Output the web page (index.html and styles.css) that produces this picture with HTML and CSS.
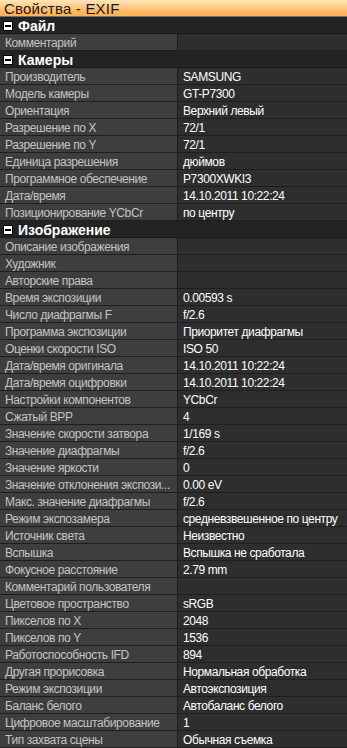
FILE: index.html
```html
<!DOCTYPE html>
<html lang="ru">
<head>
    <meta charset="UTF-8">
    <meta name="viewport" content="width=device-width, initial-scale=1.0">
    <title>Свойства - EXIF</title>
    <link rel="stylesheet" href="styles.css">
</head>
<body>
    <div class="window">
        <div class="title-bar">Свойства - EXIF</div>

        <div class="section"><span class="toggle"></span>Файл</div>
        <div class="row"><div class="name">Комментарий</div><div class="value"></div></div>

        <div class="section"><span class="toggle"></span>Камеры</div>
        <div class="row"><div class="name">Производитель</div><div class="value">SAMSUNG</div></div>
        <div class="row"><div class="name">Модель камеры</div><div class="value">GT-P7300</div></div>
        <div class="row"><div class="name">Ориентация</div><div class="value">Верхний левый</div></div>
        <div class="row"><div class="name">Разрешение по X</div><div class="value">72/1</div></div>
        <div class="row"><div class="name">Разрешение по Y</div><div class="value">72/1</div></div>
        <div class="row"><div class="name">Единица разрешения</div><div class="value">дюймов</div></div>
        <div class="row"><div class="name">Программное обеспечение</div><div class="value">P7300XWKI3</div></div>
        <div class="row"><div class="name">Дата/время</div><div class="value">14.10.2011 10:22:24</div></div>
        <div class="row"><div class="name">Позиционирование YCbCr</div><div class="value">по центру</div></div>

        <div class="section"><span class="toggle"></span>Изображение</div>
        <div class="row"><div class="name">Описание изображения</div><div class="value"></div></div>
        <div class="row"><div class="name">Художник</div><div class="value"></div></div>
        <div class="row"><div class="name">Авторские права</div><div class="value"></div></div>
        <div class="row"><div class="name">Время экспозиции</div><div class="value">0.00593 s</div></div>
        <div class="row"><div class="name">Число диафрагмы F</div><div class="value">f/2.6</div></div>
        <div class="row"><div class="name">Программа экспозиции</div><div class="value">Приоритет диафрагмы</div></div>
        <div class="row"><div class="name">Оценки скорости ISO</div><div class="value">ISO 50</div></div>
        <div class="row"><div class="name">Дата/время оригинала</div><div class="value">14.10.2011 10:22:24</div></div>
        <div class="row"><div class="name">Дата/время оцифровки</div><div class="value">14.10.2011 10:22:24</div></div>
        <div class="row"><div class="name">Настройки компонентов</div><div class="value">YCbCr</div></div>
        <div class="row"><div class="name">Сжатый BPP</div><div class="value">4</div></div>
        <div class="row"><div class="name">Значение скорости затвора</div><div class="value">1/169 s</div></div>
        <div class="row"><div class="name">Значение диафрагмы</div><div class="value">f/2.6</div></div>
        <div class="row"><div class="name">Значение яркости</div><div class="value">0</div></div>
        <div class="row"><div class="name">Значение отклонения экспози...</div><div class="value">0.00 eV</div></div>
        <div class="row"><div class="name">Макс. значение диафрагмы</div><div class="value">f/2.6</div></div>
        <div class="row"><div class="name">Режим экспозамера</div><div class="value">средневзвешенное по центру</div></div>
        <div class="row"><div class="name">Источник света</div><div class="value">Неизвестно</div></div>
        <div class="row"><div class="name">Вспышка</div><div class="value">Вспышка не сработала</div></div>
        <div class="row"><div class="name">Фокусное расстояние</div><div class="value">2.79 mm</div></div>
        <div class="row"><div class="name">Комментарий пользователя</div><div class="value"></div></div>
        <div class="row"><div class="name">Цветовое пространство</div><div class="value">sRGB</div></div>
        <div class="row"><div class="name">Пикселов по X</div><div class="value">2048</div></div>
        <div class="row"><div class="name">Пикселов по Y</div><div class="value">1536</div></div>
        <div class="row"><div class="name">Работоспособность IFD</div><div class="value">894</div></div>
        <div class="row"><div class="name">Другая прорисовка</div><div class="value">Нормальная обработка</div></div>
        <div class="row"><div class="name">Режим экспозиции</div><div class="value">Автоэкспозиция</div></div>
        <div class="row"><div class="name">Баланс белого</div><div class="value">Автобаланс белого</div></div>
        <div class="row"><div class="name">Цифровое масштабирование</div><div class="value">1</div></div>
        <div class="row"><div class="name">Тип захвата сцены</div><div class="value">Обычная съемка</div></div>
    </div>
</body>
</html>
```

FILE: styles.css
```css
body {
    margin: 0;
    background-color: #2a2a2a;
    font-family: "Liberation Sans", Arial, sans-serif;
    font-size: 12px;
    letter-spacing: -0.4px;
    overflow: hidden;
}
.window {
    width: 347px;
    height: 748px;
    overflow: hidden;
}
.title-bar {
    height: 17px;
    line-height: 17px;
    padding-left: 4px;
    background: linear-gradient(to bottom, #ffe6b8, #ffb865 70%, #ffb05a);
    border-bottom: 1px solid #6e6e6e;
    color: #1a1a1a;
    font-size: 15px;
    letter-spacing: 0.2px;
    box-sizing: border-box;
}
.section {
    display: flex;
    align-items: center;
    height: 17px;
    padding-top: 1px;
    box-sizing: border-box;
    border-bottom: 1px solid #191919;
    background-color: #232323;
    color: #ffffff;
    font-weight: bold;
    font-size: 14px;
    letter-spacing: 0;
}
.toggle {
    position: relative;
    width: 8px;
    height: 8px;
    margin: 0 5px 0 3px;
    background-color: #ffffff;
    border: 1px solid #000000;
}
.toggle::after {
    content: "";
    position: absolute;
    left: 1px;
    right: 1px;
    top: 3px;
    height: 2px;
    background-color: #000000;
}
.row {
    display: flex;
    height: 16px;
    line-height: 18px;
    border-bottom: 1px solid #1e1e1e;
}
.name {
    width: 172px;
    padding-left: 5px;
    background-color: #3e3e3e;
    color: #c4c4c4;
    border-right: 1px solid #1e1e1e;
    white-space: nowrap;
    overflow: hidden;
}
.value {
    flex: 1;
    padding-left: 5px;
    background-color: #2e2e2e;
    color: #ffffff;
    white-space: nowrap;
    overflow: hidden;
}
```
